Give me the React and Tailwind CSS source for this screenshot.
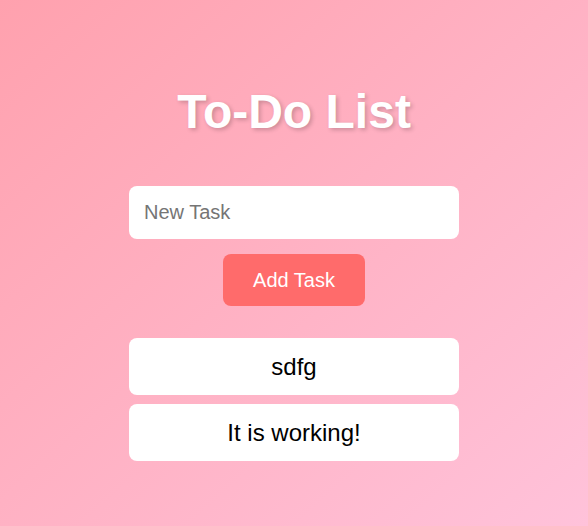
import React from "react";

const tasks = ["sdfg", "It is working!"];

const App = () => {
  return (
    <div className="min-h-screen w-full bg-gradient-to-br from-[#ffa1ae] to-[#ffc2da] font-['Liberation_Sans',Arial,sans-serif] flex flex-col items-center pt-[84px]">
      {/* Title */}
      <h1 className="text-[48px] leading-[55px] font-bold text-white [text-shadow:2px_2px_4px_rgba(0,0,0,0.2)]">
        To-Do List
      </h1>

      {/* Input */}
      <input
        type="text"
        placeholder="New Task"
        className="mt-[47px] w-[330px] h-[53px] rounded-lg bg-white px-[15px] text-[20px] text-black placeholder:text-[#757575] outline-none"
      />

      {/* Button */}
      <button className="mt-[15px] w-[142px] h-[52px] rounded-lg bg-[#ff6b6b] text-white text-[20px]">
        Add Task
      </button>

      {/* Task list */}
      <ul className="mt-[32px] flex flex-col gap-[9px]">
        {tasks.map((task) => (
          <li
            key={task}
            className="w-[330px] h-[57px] rounded-lg bg-white flex items-center justify-center text-[24px] text-black"
          >
            {task}
          </li>
        ))}
      </ul>
    </div>
  );
};

export default App;
